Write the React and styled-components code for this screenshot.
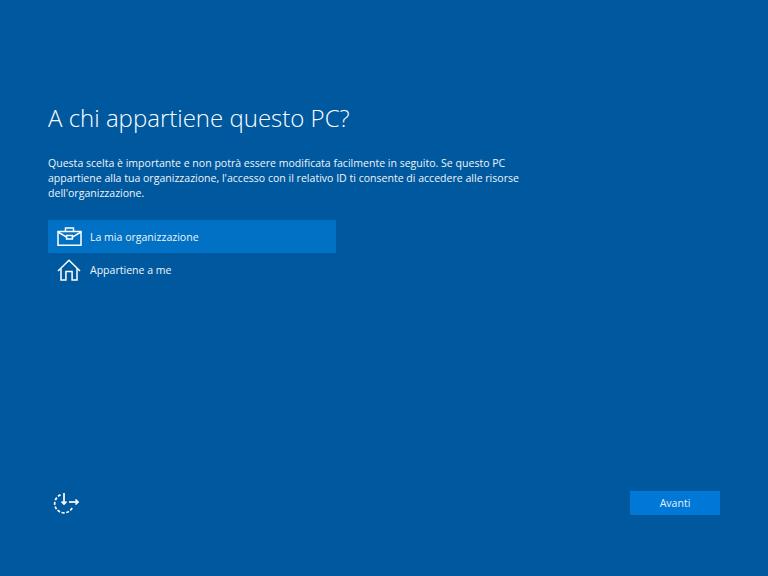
import styled, { createGlobalStyle } from "styled-components";

const GlobalStyle = createGlobalStyle`
  html, body {
    margin: 0;
    padding: 0;
    background: #00599f;
  }
`;

const Page = styled.div`
  width: 768px;
  height: 576px;
  box-sizing: border-box;
  padding: 100px 48px 61px;
  display: flex;
  flex-direction: column;
  overflow: hidden;
  background: #00599f;
  color: #fff;
  font-family: "Open Sans", "Noto Sans", sans-serif;
`;

const Title = styled.h1`
  margin: 0;
  font-size: 24px;
  line-height: 36px;
  font-weight: 300;
`;

const Description = styled.p`
  margin: 20px 0 0;
  width: 480px;
  font-size: 10.55px;
  line-height: 15px;
  color: #eef5fb;
`;

const Options = styled.div`
  margin-top: 20px;
  width: 288px;
  display: flex;
  flex-direction: column;
`;

const Option = styled.div`
  height: 33px;
  margin-top: ${(p) => (p.$selected ? "-1px" : "0")};
  display: flex;
  align-items: center;
  gap: 8px;
  padding-left: 9px;
  font-size: 10.55px;
  color: #eef5fb;
  background: ${(p) => (p.$selected ? "#0071c5" : "transparent")};
`;

const IconBox = styled.span`
  width: 25px;
  height: 25px;
  display: flex;
  align-items: center;
  justify-content: center;
`;

const Footer = styled.div`
  margin-top: auto;
  display: flex;
  align-items: center;
  justify-content: space-between;
  padding-left: 5px;
`;

const NextButton = styled.button`
  width: 90px;
  height: 24px;
  border: 0;
  padding: 0;
  background: #0078d7;
  color: #e6f2fb;
  font-family: inherit;
  font-size: 10.55px;
`;

function BriefcaseIcon() {
  return (
    <svg width="25" height="19" viewBox="0 0 25 19" fill="none" stroke="#fff" strokeWidth="1.5">
      <path d="M1 4.5h23v13.7H1z" />
      <path d="M8.5 4.3V1h8v3.3" />
      <path d="M1 5l8.6 5.2M24 5l-8.6 5.2" />
      <path d="M9.6 8.6h5.8v3.4H9.6z" />
    </svg>
  );
}

function HomeIcon() {
  return (
    <svg width="24" height="22" viewBox="1 0 24 22" overflow="visible" fill="none" stroke="#fff" strokeWidth="1.5">
      <path d="M1 12 12 1.2 23 12" />
      <path d="M4 9.4V21h4.9v-8.4h6.2V21H20V9.4" />
    </svg>
  );
}

function ClockIcon() {
  return (
    <svg width="26" height="22" viewBox="0 0 26 22" fill="none" stroke="#fff" strokeWidth="1.7">
      <path d="M7.5 2.9A9.3 9.3 0 1 0 19.3 15.7" strokeDasharray="3 1.6" />
      <path d="M11 1v11" />
      <path d="M8.5 9.5 11 12l2.5-2.5" />
      <path d="M16 10h9" />
      <path d="M22.5 7.5 25 10l-2.5 2.5" />
    </svg>
  );
}

export default function App() {
  return (
    <>
      <GlobalStyle />
      <Page>
        <Title>A chi appartiene questo PC?</Title>
        <Description>
          Questa scelta è importante e non potrà essere modificata facilmente in seguito. Se questo PC
          appartiene alla tua organizzazione, l'accesso con il relativo ID ti consente di accedere alle risorse
          dell'organizzazione.
        </Description>
        <Options>
          <Option $selected>
            <IconBox>
              <BriefcaseIcon />
            </IconBox>
            La mia organizzazione
          </Option>
          <Option>
            <IconBox>
              <HomeIcon />
            </IconBox>
            Appartiene a me
          </Option>
        </Options>
        <Footer>
          <ClockIcon />
          <NextButton>Avanti</NextButton>
        </Footer>
      </Page>
    </>
  );
}
